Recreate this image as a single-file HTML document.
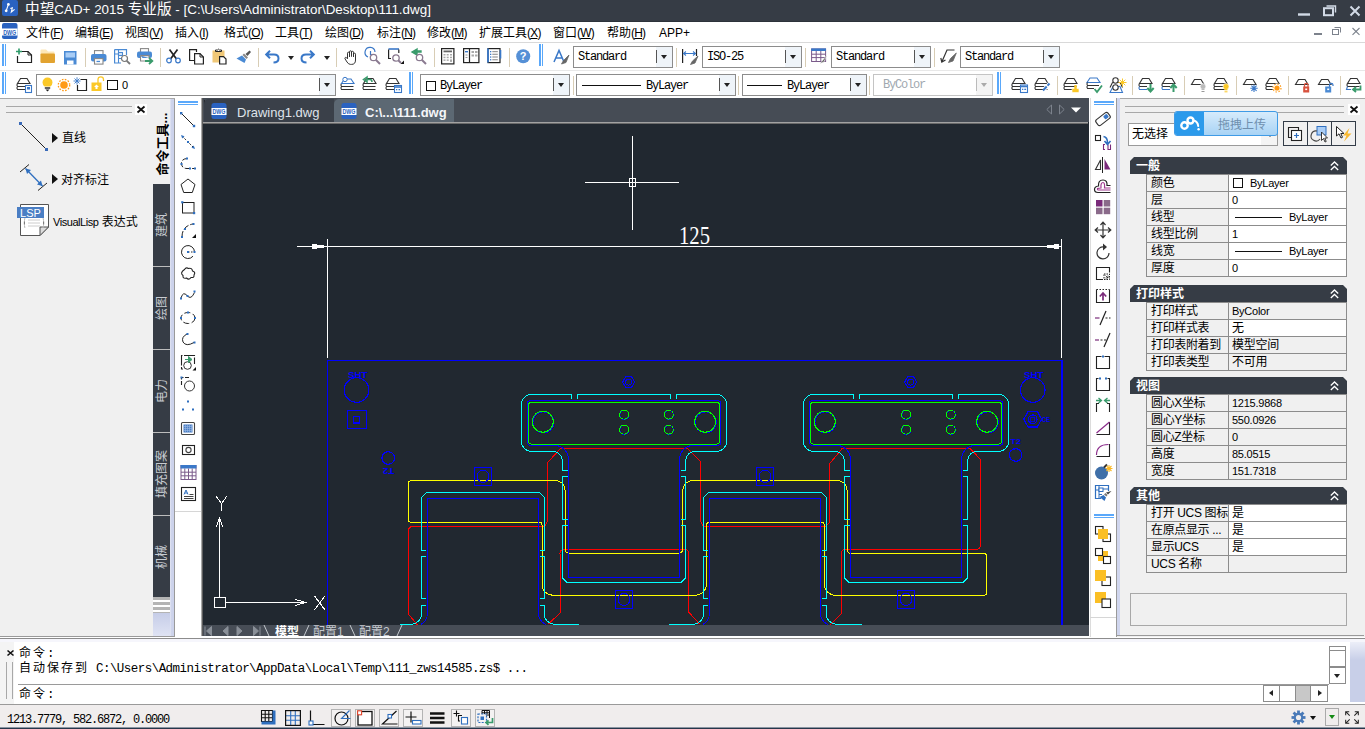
<!DOCTYPE html>
<html lang="zh">
<head>
<meta charset="utf-8">
<title>中望CAD+ 2015 专业版</title>
<style>
*{box-sizing:border-box;margin:0;padding:0}
html,body{width:1365px;height:729px;overflow:hidden;background:#fff}
body{font-family:"Liberation Sans","Noto Sans CJK SC",sans-serif;font-size:12px;color:#000;position:relative}
.abs{position:absolute}
svg{position:absolute;overflow:visible}
#title{left:0;top:0;width:1365px;height:22px;background:#363c45;color:#fff;box-shadow:inset 0 -1px 0 #2c323a}
#title .txt{left:25px;top:-1px;font-size:13.4px;line-height:21px;white-space:nowrap}
#title .txt b{font-weight:normal;font-size:14.67px}
#menu{left:0;top:22px;width:1365px;height:20px;background:#fff}
#menu span{position:absolute;top:1px;line-height:20px;font-size:12px;white-space:nowrap}
#menu i{font-style:normal;letter-spacing:-0.8px}
#menu u{text-decoration:underline;text-underline-offset:1px}
#tb{left:0;top:42px;width:1365px;height:56px;background:#fff;box-shadow:inset 0 1px 0 #d9d9d9}
.combo{position:absolute;height:22px;background:#fff;border:1px solid #8c8c8c;font-family:"Liberation Mono","Noto Sans CJK SC",monospace;font-size:12px;letter-spacing:-1.2px;line-height:20px;white-space:nowrap}
.combo .ar{position:absolute;right:0;top:0;width:16px;height:20px;background:#eff4f9}
.combo .ar:before{content:"";position:absolute;left:0;top:3px;width:1px;height:13px;background:#555}
.combo .ar:after{content:"";position:absolute;left:5px;top:8px;border:3.5px solid transparent;border-top:4px solid #222;border-bottom:0}
.combo.dis{border-color:#c4c4c4;color:#a0a8b0}.combo.dis .ar{background:#f4f4f4}.combo.dis .ar:before{background:#bbb}.combo.dis .ar:after{border-top-color:#aaa}
.vsep{position:absolute;width:1px;background:#d8cdb5}
.grip{position:absolute;width:4px;border-left:2px solid #5aa8fa;border-right:1px solid #5aa8fa}
#left{left:0;top:98px;width:175px;box-shadow:inset 0 1px 0 #a8a8a8;height:539px;background:#f0f0f0}
.vt{left:153px;width:17px;background:#363c45;box-shadow:0 1px 0 #bdbdbd;color:#c8ccd2;font-size:12px}
.vt span{position:absolute;left:50%;top:50%;white-space:nowrap;transform:translate(-50%,-50%) rotate(-90deg);line-height:17px}
.vt.act{background:#f0f0f0;color:#000;font-weight:bold;font-size:13px}
.vt.act span{top:46px}
#dtb{left:175px;top:98px;width:26px;height:539px;background:#fff}
#mtb{left:1090px;top:98px;width:27px;height:539px;background:#fff;border-right:1px solid #9a9a9a;box-shadow:inset 1px 0 0 #dcdcdc}
#draw{left:201px;top:98px;width:888px;height:539px;background:#212830}
.dtab{top:1px;height:23px;border-radius:5px 0 0 0;font-size:13px;line-height:22px;white-space:nowrap}
.dtab span{position:absolute;top:3px}
.cl{font-size:12px;line-height:16px;letter-spacing:2px;white-space:pre}
.cl .mono{font-family:"Liberation Mono",monospace;font-size:12.5px;letter-spacing:-0.54px}
#right{left:1117px;top:98px;width:248px;height:539px;background:#f0f0f0;box-shadow:inset 0 1px 0 #a8a8a8}
.ph{left:13px;width:217px;height:17px;background:#363c45;color:#fff;clip-path:polygon(4px 0,213px 0,217px 4px,217px 17px,0 17px,0 4px)}
.ph b{position:absolute;left:6px;top:1px;font-size:12px;line-height:17px}
.pl{left:29px;width:82px;height:18px;border:1px solid #8c8c8c;border-right:0;font-size:12px;line-height:16px;padding-left:4px;letter-spacing:-0.35px;white-space:nowrap;overflow:hidden}
.pv{left:111px;width:119px;height:18px;border:1px solid #8c8c8c;font-size:11px;line-height:16px;padding-left:3px;letter-spacing:-0.25px;white-space:nowrap;overflow:hidden}
.pv.w{background:#fff}
.pv .cj{font-size:12px}
.pv .sq{position:absolute;left:4px;top:3px;width:10px;height:10px;border:1px solid #111;background:#fff}
.pv .ln{position:absolute;left:6px;top:8px;width:47px;height:1px;background:#111}
#cmd{left:0;top:639px;width:1365px;height:65px;background:#fff}
.sb{top:5px;width:20px;height:18px;border:1px solid #b4b4b4;background:#f4f2f2}
#status{left:0;top:704px;width:1365px;height:25px;background:#f0eded;box-shadow:inset 0 1px 0 #9a9a9a}
</style>
</head>
<body>
<!-- TITLE BAR -->
<div id="title" class="abs">
  <svg width="18" height="18" style="left:2px;top:0" viewBox="0 0 18 18"><rect x="0" y="0" width="16" height="16" rx="2" fill="#2a62c0"/><path d="M4.200 10.800L6.400 4.400M8.300 8.600L10.300 7.800L9.300 12L12.600 9.400" stroke="#fff" stroke-width="1.100" fill="none"/><circle cx="6.400" cy="4.400" r="1.400" fill="#fff"/><circle cx="4.200" cy="10.800" r="1.400" fill="#fff"/></svg>
  <div class="abs txt"><b>中望</b>CAD+ 2015 <b>专业版</b> - [C:\Users\Administrator\Desktop\111.dwg]</div>
  <svg style="left:1296px;top:3px" width="66" height="16" viewBox="0 0 66 16" fill="none" stroke="#d2dae6"><path d="M2 11.500H14" stroke-width="2.400"/><rect x="28" y="5.200" width="9" height="7" stroke-width="2"/><path d="M30.500 3H39.500V9.500" stroke-width="1.400"/><path d="M54.500 3.500L63.500 12.500M63.500 3.500L54.500 12.500" stroke-width="2"/></svg>
</div>
<!-- MENU BAR -->
<div id="menu" class="abs">
  <svg style="left:2px;top:1px" width="16" height="16" viewBox="0 0 16 16"><rect x="0" y="0" width="15.500" height="16" rx="2" fill="#2a62c0"/><rect x="0" y="5.500" width="15.500" height="7" fill="#fff"/><text x="7.700" y="11.500" font-size="6.500" font-weight="bold" fill="#2a62c0" text-anchor="middle" font-family="Liberation Sans, sans-serif" textLength="13" lengthAdjust="spacingAndGlyphs">DWG</text></svg>
  <svg style="left:1312px;top:4px" width="50" height="10" viewBox="0 0 50 10" fill="none" stroke="#7c828c"><path d="M2 8H10" stroke-width="2"/><rect x="20.500" y="3.500" width="6" height="5" stroke-width="1"/><path d="M22.500 1.500H28.500V6.500" stroke-width="1"/><path d="M40.500 2L47.500 8.800M47.500 2L40.500 8.800" stroke-width="1.100"/></svg>
  <span style="left:26px">文件<i>(<u>F</u>)</i></span>
  <span style="left:75px">编辑<i>(<u>E</u>)</i></span>
  <span style="left:125px">视图<i>(<u>V</u>)</i></span>
  <span style="left:175px">插入<i>(<u>I</u>)</i></span>
  <span style="left:224px">格式<i>(<u>O</u>)</i></span>
  <span style="left:275px">工具<i>(<u>T</u>)</i></span>
  <span style="left:325px">绘图<i>(<u>D</u>)</i></span>
  <span style="left:377px">标注<i>(<u>N</u>)</i></span>
  <span style="left:427px">修改<i>(<u>M</u>)</i></span>
  <span style="left:479px">扩展工具<i>(<u>X</u>)</i></span>
  <span style="left:553px">窗口<i>(<u>W</u>)</i></span>
  <span style="left:607px">帮助<i>(<u>H</u>)</i></span>
  <span style="left:659px">APP+</span>
</div>
<!-- TOOLBARS -->
<div id="tb" class="abs"><div class="abs" style="left:0;top:28px;width:1365px;height:1px;background:#e8e8e8"></div>
<div class="grip" style="left:2px;top:2px;height:22px"></div>
<div class="grip" style="left:2px;top:30px;height:22px"></div>
<!-- row1 icons: coordinates relative to #tb (top=42) -->
<svg style="left:16px;top:6px" width="17" height="17" viewBox="0 0 17 17"><path d="M4 3.5H12L15.5 7V14.5H1.5V8" fill="none" stroke="#222" stroke-width="1.2"/><path d="M12 3.5V7H15.5" fill="none" stroke="#222" stroke-width="1"/><path d="M3 0.5V6.5M0 3.5H6" stroke="#2e9b6a" stroke-width="1.6"/></svg>
<svg style="left:40px;top:7px" width="16" height="15" viewBox="0 0 16 15"><path d="M0.5 1.5Q0.5 0.5 1.5 0.5H6L8 2.5H13.5Q14.5 2.5 14.5 3.5V13H0.5Z" fill="#fde7b8"/><path d="M0.5 5.5Q0.5 4.5 1.5 4.5H14Q15 4.5 15 5.5V13Q15 14 14 14H1.5Q0.5 14 0.5 13Z" fill="#e2a330"/></svg>
<svg style="left:64px;top:9px" width="13" height="14" viewBox="0 0 13 14"><rect x="0" y="0" width="12.5" height="13.5" fill="#4a8ad4"/><rect x="1.5" y="1.5" width="9.5" height="5" fill="#a9cdf6"/><rect x="3" y="9.5" width="6.5" height="4" fill="#fff"/></svg>
<div class="vsep" style="left:85px;top:6px;height:19px"></div>
<svg style="left:91px;top:8px" width="16" height="15" viewBox="0 0 16 15"><rect x="3.5" y="0.6" width="8.5" height="5" fill="#fff" stroke="#888" stroke-width="1.1"/><rect x="0" y="4" width="15.5" height="7.5" rx="2" fill="#4a8ad4"/><rect x="3.5" y="8.6" width="8.5" height="5.5" fill="#fff" stroke="#888" stroke-width="1.1"/><rect x="5.5" y="10.8" width="3.5" height="1.3" fill="#4a8ad4"/></svg>
<svg style="left:114px;top:6px" width="17" height="17" viewBox="0 0 17 17"><path d="M0.6 1.6H12.5V7M0.6 1.6V15H7" fill="none" stroke="#4a8ad4" stroke-width="1.2"/><path d="M4.5 1.6V15M4.5 10.5H8M0.6 6H4.5" stroke="#4a8ad4" stroke-width="1.1" fill="none"/><rect x="4.5" y="4.5" width="4" height="3" fill="#dbe9fb" stroke="#4a8ad4" stroke-width="1.1"/><circle cx="10.5" cy="10.5" r="3" fill="#fff" stroke="#777" stroke-width="1.2"/><path d="M12.8 12.8L16 16" stroke="#777" stroke-width="1.8"/></svg>
<svg style="left:137px;top:6px" width="17" height="17" viewBox="0 0 17 17"><rect x="3.5" y="0.6" width="8" height="5" fill="#fff" stroke="#888" stroke-width="1.1"/><rect x="0" y="3.5" width="15" height="6.5" rx="2" fill="#4a8ad4"/><path d="M3.5 7.6H12V10M3.5 7.6V13H8" fill="#fff" stroke="#888" stroke-width="1.1"/><path d="M8 13H15M12 10L15.3 13L12 16" fill="none" stroke="#3a9b6c" stroke-width="1.8"/></svg>
<div class="vsep" style="left:160px;top:6px;height:19px"></div>
<svg style="left:166px;top:7px" width="16" height="15" viewBox="0 0 16 15"><path d="M3.5 0.5L10.5 10M11.5 0.5L4.5 10" stroke="#222" stroke-width="1.7" fill="none"/><circle cx="3" cy="11.5" r="2.3" fill="#fff" stroke="#3a78c8" stroke-width="1.2"/><circle cx="12" cy="11.5" r="2.3" fill="#fff" stroke="#3a78c8" stroke-width="1.2"/></svg>
<svg style="left:189px;top:7px" width="16" height="16" viewBox="0 0 16 16"><path d="M5 11.5H0.6V0.6H7.5V3" fill="none" stroke="#222" stroke-width="1.2"/><path d="M5.6 4.6H11L14.4 8V15H5.6Z" fill="#fff" stroke="#222" stroke-width="1.2"/><path d="M11 4.6V8H14.4" fill="none" stroke="#222" stroke-width="1"/></svg>
<svg style="left:212px;top:6px" width="16" height="17" viewBox="0 0 16 17"><rect x="0.5" y="2.5" width="12" height="12" fill="#f0c878"/><path d="M3.5 3.5V2H5.5Q6.5 0.3 7.5 2H9.5V3.5Z" fill="#fff" stroke="#222" stroke-width="1"/><path d="M7.6 8.6H11.5L14 11V16H7.6Z" fill="#fff" stroke="#222" stroke-width="1.2"/></svg>
<svg style="left:236px;top:8px" width="16" height="14" viewBox="0 0 16 14"><path d="M13.5 0.5L15 2L11.5 6L9.5 4Z" fill="#555"/><path d="M8 3.5L12 7.5L10.5 9L6.5 5Z" fill="#888"/><path d="M6 5.5L10 9.5L8.5 13L0.5 8.5Z" fill="#4a8ad4"/></svg>
<div class="vsep" style="left:258px;top:6px;height:19px"></div>
<svg style="left:265px;top:8px" width="15" height="14" viewBox="0 0 15 14"><path d="M5 0.8L1.2 4.5L5 8.2M1.5 4.5H9Q13.5 4.5 13.5 8.5Q13.5 12.5 8.5 12.5" fill="none" stroke="#3a78c8" stroke-width="2"/></svg>
<div class="abs" style="left:288px;top:14px;border:3px solid transparent;border-top:4px solid #222;border-bottom:0"></div>
<svg style="left:300px;top:8px" width="15" height="14" viewBox="0 0 15 14"><path d="M10 0.8L13.8 4.5L10 8.2M13.5 4.5H6Q1.5 4.5 1.5 8.5Q1.5 12.5 6.5 12.5" fill="none" stroke="#3a78c8" stroke-width="2"/></svg>
<div class="abs" style="left:324px;top:14px;border:3px solid transparent;border-top:4px solid #222;border-bottom:0"></div>
<div class="vsep" style="left:336px;top:6px;height:19px"></div>
<svg style="left:344px;top:8px" width="13" height="15" viewBox="0 0 13 15"><path d="M3.500 8.800V3.200A1 1 0 0 1 5.500 3.200V7M5.500 6.500V1.800A1 1 0 0 1 7.500 1.800V6.500M7.500 6.500V2.300A1 1 0 0 1 9.500 2.300V7M9.500 7V4.200A1 1 0 0 1 11.500 4.200V10Q11.500 14.400 7.500 14.400H6.500Q4.500 14.400 3 12L1 8.800Q0.600 7.600 1.600 7.400Q2.600 7.300 3.500 8.800" fill="none" stroke="#333" stroke-width="1"/></svg>
<svg style="left:365px;top:6px" width="16" height="17" viewBox="0 0 16 17"><path d="M3 9A5 5 0 1 1 10 4" fill="none" stroke="#3a78c8" stroke-width="1.2"/><path d="M5.5 3V6.5H8" fill="none" stroke="#3a78c8" stroke-width="1.2"/><circle cx="8.5" cy="9.5" r="3.2" fill="#fff" stroke="#8a7a90" stroke-width="1.3"/><path d="M11 12L15 16" stroke="#8a7a90" stroke-width="1.9"/></svg>
<svg style="left:388px;top:6px" width="17" height="17" viewBox="0 0 17 17"><path d="M0.5 1H11" stroke="#3a78c8" stroke-width="1.6"/><path d="M3 10.5H0.6V1.5M10.8 1.5V5" fill="none" stroke="#222" stroke-width="1.2"/><circle cx="8" cy="10" r="3.2" fill="#fff" stroke="#8a7a90" stroke-width="1.3"/><path d="M10.5 12.5L13 15" stroke="#8a7a90" stroke-width="1.9"/><path d="M16 12.5V16H12.5Z" fill="#111"/></svg>
<svg style="left:411px;top:6px" width="16" height="17" viewBox="0 0 16 17"><path d="M6 1L1 4L6 7ZM5 4H10V3H5Z" fill="#3a9b6c" stroke="#3a9b6c" stroke-width="1.4"/><circle cx="8.5" cy="9.5" r="3.2" fill="#fff" stroke="#8a7a90" stroke-width="1.3"/><path d="M11 12L15 16" stroke="#8a7a90" stroke-width="1.9"/></svg>
<div class="vsep" style="left:434px;top:6px;height:19px"></div>
<svg style="left:441px;top:6px" width="14" height="17" viewBox="0 0 14 17"><rect x="0.6" y="0.6" width="12.3" height="15.3" fill="#fff" stroke="#222" stroke-width="1.2"/><rect x="2.5" y="2.5" width="8.5" height="1.8" fill="#666"/><g fill="#aaa"><rect x="2.5" y="6" width="2" height="1.5"/><rect x="5.7" y="6" width="2" height="1.5"/><rect x="9" y="6" width="2" height="1.5"/><rect x="2.5" y="8.7" width="2" height="1.5"/><rect x="5.7" y="8.7" width="2" height="1.5"/><rect x="9" y="8.7" width="2" height="1.5"/><rect x="2.5" y="11.4" width="2" height="1.5"/><rect x="5.7" y="11.4" width="2" height="1.5"/><rect x="9" y="11.4" width="2" height="2.5"/></g></svg>
<svg style="left:463px;top:6px" width="17" height="16" viewBox="0 0 17 16"><rect x="0.6" y="0.6" width="15.3" height="14" fill="#fff" stroke="#222" stroke-width="1.2"/><path d="M6.5 0.6V14.6" stroke="#222" stroke-width="1.2"/><rect x="2" y="3" width="3" height="1.4" fill="#3a78c8"/><rect x="2.5" y="6.5" width="2" height="1" fill="#999"/><rect x="2.5" y="9" width="2" height="1" fill="#999"/><g fill="#aaa"><rect x="8.5" y="3" width="2.5" height="2"/><rect x="12" y="3" width="2.5" height="2"/><rect x="8.5" y="6.5" width="2.5" height="2"/><rect x="12" y="6.5" width="2.5" height="2"/></g></svg>
<svg style="left:487px;top:6px" width="15" height="16" viewBox="0 0 15 16"><rect x="1" y="0.6" width="12" height="14" fill="#fff" stroke="#222" stroke-width="1.2"/><path d="M1 0.6V14.6" stroke="#3a78c8" stroke-width="1.8"/><path d="M13.5 2V10.5" stroke="#3a78c8" stroke-width="1.6"/><g fill="#3a78c8"><rect x="3" y="3" width="1.3" height="1.3"/><rect x="3" y="5.7" width="1.3" height="1.3"/><rect x="3" y="8.4" width="1.3" height="1.3"/><rect x="3" y="11.1" width="1.3" height="1.3"/></g><g fill="#999"><rect x="5.3" y="3" width="5.5" height="1.2"/><rect x="5.3" y="5.7" width="5.5" height="1.2"/><rect x="5.3" y="8.4" width="5.5" height="1.2"/><rect x="5.3" y="11.1" width="5.5" height="1.2"/></g></svg>
<div class="vsep" style="left:509px;top:6px;height:19px"></div>
<svg style="left:516px;top:7px" width="15" height="15" viewBox="0 0 15 15"><circle cx="7.2" cy="7.2" r="7" fill="#5590d6"/><text x="7.2" y="11.3" font-size="11" font-weight="bold" fill="#fff" text-anchor="middle" font-family="Liberation Sans, sans-serif">?</text></svg>
<div class="grip" style="left:539px;top:2px;height:22px"></div>
<svg style="left:553px;top:7px" width="17" height="16" viewBox="0 0 17 16"><path d="M1 13L6 1.5L11 13M3 9H9" fill="none" stroke="#3a78c8" stroke-width="1.5"/><path d="M16 6L10.500 11.500L8.500 15L13 13.500Z" fill="#666" stroke="#666" stroke-width="0.800"/></svg>
<div class="combo" style="left:573px;top:4px;width:100px"><span style="margin-left:4px">Standard</span><div class="ar"></div></div>
<div class="vsep" style="left:676px;top:6px;height:19px"></div>
<svg style="left:682px;top:6px" width="17" height="17" viewBox="0 0 17 17"><path d="M0.6 1V15M14.5 1V8" stroke="#222" stroke-width="1.2"/><path d="M1.5 5.5H13.5M4 3.5L1.5 5.5L4 7.5M11 3.5L13.5 5.5L11 7.5" fill="none" stroke="#3a78c8" stroke-width="1.1"/><path d="M16 8L10.500 13L8.500 16.500L13 15Z" fill="#666" stroke="#666" stroke-width="0.800"/></svg>
<div class="combo" style="left:702px;top:4px;width:100px"><span style="margin-left:4px">ISO-25</span><div class="ar"></div></div>
<div class="vsep" style="left:805px;top:6px;height:19px"></div>
<svg style="left:811px;top:6px" width="17" height="17" viewBox="0 0 17 17"><rect x="0.6" y="1" width="14" height="12.5" fill="#fff" stroke="#7a5a8a" stroke-width="1"/><rect x="0.2" y="0.4" width="14.8" height="2.6" fill="#3a78c8"/><path d="M0.6 6.2H14.6M0.6 9.6H14.6M5.2 3V13.5M9.8 3V13.5" stroke="#7a5a8a" stroke-width="1"/><path d="M16 7L11.5 12.5L9 15.5L13 14Z" fill="#666" stroke="#fff" stroke-width="0.5"/></svg>
<div class="combo" style="left:831px;top:4px;width:100px"><span style="margin-left:4px">Standard</span><div class="ar"></div></div>
<div class="vsep" style="left:934px;top:6px;height:19px"></div>
<svg style="left:940px;top:7px" width="17" height="15" viewBox="0 0 17 15"><path d="M14.5 1H7L2 12.5M0.8 9L1.8 13L5.5 11" fill="none" stroke="#333" stroke-width="1.2"/><path d="M16.300 4L10.500 9.500L8.500 13.500L13 12Z" fill="#666" stroke="#666" stroke-width="0.800"/></svg>
<div class="combo" style="left:960px;top:4px;width:100px"><span style="margin-left:4px">Standard</span><div class="ar"></div></div>
<!-- row2 -->
<svg style="left:16px;top:35px" width="16" height="16"><path d="M4.5 1.5H11L14 6.5H1.5Z M1.5 6.5Q0.3 8 1.5 9.5H13.5 M1.5 9.5Q0.3 11 1.5 12.500H13.500" fill="none" stroke="#333" stroke-width="1.100"/><rect x="9.5" y="8.5" width="6" height="7" fill="#fff" stroke="#3a78c8" stroke-width="1.1"/><rect x="11" y="10" width="3" height="2.5" fill="#3a78c8"/></svg>
<div class="combo" style="left:36px;top:32px;width:300px;height:22px">
 <svg style="left:5px;top:2px" width="12" height="15" viewBox="0 0 12 15"><path d="M5.5 0.5A5 5 0 0 1 10.5 5.5Q10.5 7.5 8.5 9.5H2.5Q0.5 7.5 0.5 5.5A5 5 0 0 1 5.5 0.5Z" fill="#fbc827"/><rect x="2.8" y="10.3" width="5.4" height="1.4" fill="#222"/><path d="M3.5 12.5H7.5L5.5 14.5Z" fill="#222"/></svg>
 <svg style="left:20px;top:3px" width="14" height="14" viewBox="0 0 14 14"><circle cx="7" cy="7" r="3.8" fill="#ff9a16"/><g stroke="#ff9a16" stroke-width="1.3" stroke-dasharray="1.6 1.4" fill="none"><circle cx="7" cy="7" r="5.7"/></g></svg>
 <svg style="left:36px;top:2px" width="15" height="15" viewBox="0 0 15 15"><path d="M7.5 2.5H13.5V13.5H4.5V8" fill="none" stroke="#222" stroke-width="1.2"/><path d="M4 0.3V7.7M0.5 4H7.5M1.5 1.5L6.5 6.5M6.5 1.5L1.5 6.5" stroke="#3a78c8" stroke-width="0.9"/></svg>
 <svg style="left:54px;top:1px" width="14" height="16" viewBox="0 0 14 16"><path d="M7 7V3.5Q7 0.8 9.8 0.8Q12.5 0.8 12.5 3.5V5" fill="none" stroke="#fbc827" stroke-width="1.3"/><rect x="0.5" y="6.5" width="10" height="8.5" fill="#fbc827"/><path d="M5.5 8.5L8 11H6.5V13H4.5V11H3Z" fill="#fff"/></svg>
 <div class="abs" style="left:70px;top:5px;width:11px;height:10px;border:1px solid #111;background:#fff"></div>
 <span class="abs" style="left:85px;top:0;font-family:'Liberation Sans',sans-serif;font-size:11px">0</span>
 <div class="ar" style="height:20px"></div>
</div>
<svg style="left:340px;top:35px" width="16" height="16"><path d="M1.500 6.500Q0.300 8 1.500 9.500H13.500M1.500 9.500Q0.300 11 1.500 12.500H13.500" fill="none" stroke="#333" stroke-width="1.100"/><path d="M7 2H11L14 6.500H1.500L3.500 3.500" fill="none" stroke="#3a78c8" stroke-width="1.100"/><circle cx="5" cy="2.500" r="2.200" fill="#fff" stroke="#3a78c8" stroke-width="1"/></svg>
<svg style="left:362px;top:35px" width="16" height="16"><path d="M4.5 1.5H11L14 6.5H1.5Z M1.5 6.5Q0.3 8 1.5 9.5H13.5 M1.5 9.5Q0.3 11 1.5 12.500H13.500" fill="none" stroke="#333" stroke-width="1.100"/><path d="M5 0L1.5 2.5L5 5ZM4 2.5H8Q10 2.5 10 5" fill="none" stroke="#3a9b6c" stroke-width="1.5"/></svg>
<svg style="left:385px;top:35px" width="17" height="16"><path d="M4.5 1.5H11L14 6.5H1.5Z M1.5 6.5Q0.3 8 1.5 9.5H13.5 M1.5 9.5Q0.3 11 1.5 12.500H13.500" fill="none" stroke="#333" stroke-width="1.100"/><rect x="9.5" y="8.5" width="7" height="7" fill="#fff" stroke="#3a78c8" stroke-width="1.1"/><path d="M9.5 10H16.5" stroke="#3a78c8" stroke-width="1.6"/><rect x="11" y="12" width="1.3" height="1.3" fill="#3a78c8"/><rect x="13.5" y="12" width="1.5" height="1.3" fill="#3a78c8"/></svg>
<div class="grip" style="left:409px;top:30px;height:22px"></div>
<div class="combo" style="left:420px;top:32px;width:150px;height:22px"><div class="abs" style="left:5px;top:6px;width:10px;height:10px;border:1px solid #111"></div><span class="abs" style="left:19px;top:1px">ByLayer</span><div class="ar" style="height:20px"></div></div>
<div class="vsep" style="left:573px;top:34px;height:19px"></div>
<div class="combo" style="left:576px;top:32px;width:160px;height:22px"><div class="abs" style="left:5px;top:10px;width:59px;height:1px;background:#111"></div><span class="abs" style="left:69px;top:1px">ByLayer</span><div class="ar" style="height:20px"></div></div>
<div class="vsep" style="left:738px;top:34px;height:19px"></div>
<div class="combo" style="left:742px;top:32px;width:125px;height:22px"><div class="abs" style="left:4px;top:10px;width:35px;height:1px;background:#111"></div><span class="abs" style="left:44px;top:1px">ByLayer</span><div class="ar" style="height:20px"></div></div>
<div class="vsep" style="left:869px;top:34px;height:19px"></div>
<div class="combo dis" style="left:873px;top:32px;width:120px;height:22px"><span class="abs" style="left:9px;top:0px">ByColor</span><div class="ar" style="height:20px"></div></div>
<div class="grip" style="left:997px;top:30px;height:22px"></div>
<svg style="left:1011px;top:35px" width="17" height="16"><path d="M4.5 1.5H11L14 6.5H1.5Z M1.5 6.5Q0.3 8 1.5 9.5H13.5 M1.5 9.5Q0.3 11 1.5 12.500H13.500" fill="none" stroke="#333" stroke-width="1.100"/><rect x="9.5" y="8" width="7" height="7.5" fill="#fff" stroke="#3a78c8" stroke-width="1.1"/><path d="M9.5 9.5H16.5" stroke="#3a78c8" stroke-width="1.6"/><rect x="11" y="11.7" width="1.3" height="1.3" fill="#3a78c8"/><rect x="13.3" y="11.7" width="1.8" height="1.3" fill="#3a78c8"/></svg>
<svg style="left:1034px;top:35px" width="17" height="16"><path d="M4.5 1.5H11L14 6.5H1.5Z M1.5 6.5Q0.3 8 1.5 9.5H13.5 M1.5 9.5Q0.3 11 1.5 12.500H13.500" fill="none" stroke="#333" stroke-width="1.100"/><path d="M15.5 6.5L10 12.5" stroke="#fff" stroke-width="4"/><path d="M15.5 6.5L13.5 8.7M12.7 9.5L9 13.5" stroke="#3a78c8" stroke-width="2"/></svg>
<div class="vsep" style="left:1057px;top:34px;height:19px"></div>
<svg style="left:1063px;top:35px" width="17" height="16"><path d="M4.5 1.5H11L14 6.5H1.5Z M1.5 6.5Q0.3 8 1.5 9.5H13.5 M1.5 9.5Q0.3 11 1.5 12.500H13.500" fill="none" stroke="#333" stroke-width="1.100"/><rect x="9" y="11.5" width="7" height="4" rx="1" fill="#fbc827" stroke="#fff" stroke-width="0.6"/><rect x="11.3" y="8" width="2.4" height="4" fill="#fbc827"/></svg>
<svg style="left:1086px;top:35px" width="17" height="17" viewBox="0 0 17 17"><path d="M4 1H11L14 5.5H1Z" fill="none" stroke="#3a78c8" stroke-width="1.1"/><path d="M1.5 5.5Q0.3 7 1.5 8.5H13 M1.5 8.5Q0.3 10 1.5 11.5H8" fill="none" stroke="#333" stroke-width="1.1"/><path d="M8.5 12L11 15L16 8.5" fill="none" stroke="#3a9b6c" stroke-width="1.8"/></svg>
<svg style="left:1109px;top:35px" width="18" height="17" viewBox="0 0 18 17"><path d="M3.5 5.5H11L13.5 10.5M1 10.5L3.5 5.5" fill="none" stroke="#333" stroke-width="1.1"/><path d="M1 15.5L4 9.5H11L13.5 15.5Z" fill="#fff" stroke="#3a78c8" stroke-width="1.1"/><circle cx="6.5" cy="3.5" r="2.7" fill="#fff" stroke="#333" stroke-width="1.1"/><circle cx="6.5" cy="10.5" r="2.7" fill="#fff" stroke="#333" stroke-width="1.1"/><path d="M13.5 1.5V9.5M9.5 5.5H17.5M10.7 2.7L16.3 8.3M16.3 2.7L10.7 8.3" stroke="#fbc827" stroke-width="1"/></svg>
<div class="vsep" style="left:1132px;top:34px;height:19px"></div>
<svg style="left:1138px;top:35px" width="17" height="16"><path d="M4.5 1.5H11L14 6.5H1.5Z M1.5 6.5Q0.3 8 1.5 9.5H9" fill="none" stroke="#333" stroke-width="1.1"/><path d="M1.5 9.5Q0.3 11 1.5 12.5H9" fill="none" stroke="#3a78c8" stroke-width="1.1"/><path d="M12.5 7V14M9.3 11L12.5 14.5L15.7 11" fill="none" stroke="#3a9b6c" stroke-width="2"/></svg>
<svg style="left:1161px;top:35px" width="17" height="16"><path d="M4.5 1.5H11L14 6.5H1.5Z M1.5 6.5Q0.3 8 1.5 9.5H9" fill="none" stroke="#333" stroke-width="1.1"/><path d="M1.5 9.5Q0.3 11 1.5 12.5H9" fill="none" stroke="#3a78c8" stroke-width="1.1"/><path d="M12.5 15V8M9.3 11L12.5 7.5L15.7 11" fill="none" stroke="#3a9b6c" stroke-width="2"/></svg>
<div class="vsep" style="left:1184px;top:34px;height:19px"></div>
<svg style="left:1190px;top:35px" width="17" height="16"><path d="M4.500 2.500H11L14 7.500H1.500Z" fill="none" stroke="#333" stroke-width="1.100"/><circle cx="13" cy="9.5" r="2.8" fill="#bbb" stroke="#fff" stroke-width="0.6"/><rect x="11.5" y="11.5" width="3" height="1.5" fill="#bbb"/><rect x="11.5" y="14" width="3" height="1" fill="#999"/></svg>
<svg style="left:1213px;top:35px" width="17" height="16"><path d="M4.5 1.5H11L14 6.5H1.5Z M1.5 6.5Q0.3 8 1.5 9.5H13.5 M1.5 9.5Q0.3 11 1.5 12.500H13.500" fill="none" stroke="#333" stroke-width="1.100"/><circle cx="13" cy="9.5" r="3" fill="#fbc827" stroke="#fff" stroke-width="0.6"/><rect x="11.5" y="11.5" width="3" height="1.8" fill="#fbc827"/><rect x="11.5" y="14.3" width="3" height="1" fill="#fbc827"/></svg>
<div class="vsep" style="left:1236px;top:34px;height:19px"></div>
<svg style="left:1242px;top:35px" width="17" height="16"><path d="M4.500 2.500H11L14 7.500H1.500Z" fill="none" stroke="#333" stroke-width="1.100"/><path d="M12 7.5V15M8.3 11.2H15.7M9.4 8.6L14.6 13.8M14.6 8.6L9.4 13.8" stroke="#3a78c8" stroke-width="1.1"/></svg>
<svg style="left:1265px;top:35px" width="17" height="16"><path d="M4.5 1.5H11L14 6.5H1.5Z M1.5 6.5Q0.3 8 1.5 9.5H13.5 M1.5 9.5Q0.3 11 1.5 12.500H13.500" fill="none" stroke="#333" stroke-width="1.100"/><circle cx="12" cy="11" r="4.6" fill="#fff"/><circle cx="12" cy="11" r="2.6" fill="#ff9a16"/><circle cx="12" cy="11" r="4" fill="none" stroke="#ff9a16" stroke-width="1.2" stroke-dasharray="1.5 1.6"/></svg>
<div class="vsep" style="left:1288px;top:34px;height:19px"></div>
<svg style="left:1294px;top:35px" width="17" height="16"><path d="M4.500 2.500H11L14 7.500H1.500Z" fill="none" stroke="#333" stroke-width="1.100"/><path d="M10.5 10V8Q10.5 6.3 12.2 6.3Q14 6.3 14 8V10" fill="none" stroke="#d8523e" stroke-width="1.2"/><rect x="9.2" y="9.5" width="6" height="6" fill="#d8523e"/><rect x="11.2" y="11.5" width="2" height="1.6" fill="#fff"/></svg>
<svg style="left:1317px;top:35px" width="17" height="16"><path d="M4.500 2.500H11L14 7.500H1.500Z" fill="none" stroke="#333" stroke-width="1.100"/><path d="M12.5 10V8Q12.5 6.3 14.2 6.3Q16 6.3 16 8V9" fill="none" stroke="#3a78c8" stroke-width="1.2"/><rect x="8.2" y="9.5" width="6" height="6" fill="#4a8ad4"/><rect x="10.2" y="11.5" width="2" height="1.6" fill="#fff"/></svg>
<div class="vsep" style="left:1340px;top:34px;height:19px"></div>
<svg style="left:1346px;top:35px" width="17" height="16"><path d="M4.5 1.5H11L14 6.5H1.5Z M1.5 6.5Q0.3 8 1.5 9.5H13.5" fill="none" stroke="#333" stroke-width="1.1"/><path d="M1.5 9.5L0.5 12.5H5" fill="none" stroke="#3a78c8" stroke-width="1.1"/><path d="M14.5 8.5V12.5H7.5M10 10L7 12.5L10 15" fill="none" stroke="#3a9b6c" stroke-width="1.8"/></svg>
</div>
<!-- LEFT PANEL -->
<div id="left" class="abs">
 <div class="abs" style="left:6px;top:8px;width:126px;height:1px;background:#a8a8a8"></div>
 <div class="abs" style="left:6px;top:14px;width:126px;height:1px;background:#a8a8a8"></div>
 <div class="abs" style="left:135px;top:6px;width:12px;height:11px;background:#fff"></div>
 <svg style="left:137px;top:8px" width="8" height="7" viewBox="0 0 8 7"><path d="M0.5 0.5L7.5 6.5M7.5 0.5L0.5 6.5" stroke="#111" stroke-width="1.8"/></svg>
 <svg style="left:17px;top:22px" width="34" height="34" viewBox="0 0 34 34"><path d="M3.5 3.5L29.5 29.5" stroke="#222" stroke-width="1"/><rect x="2" y="2" width="3" height="3" fill="#3a6ab8"/><rect x="28" y="28" width="3" height="3" fill="#3a6ab8"/></svg>
 <div class="abs" style="left:52px;top:35px;border:5px solid transparent;border-left:6px solid #111;border-right:0"></div>
 <div class="abs" style="left:62px;top:32px;font-size:12px;line-height:16px">直线</div>
 <svg style="left:17px;top:64px" width="34" height="32" viewBox="0 0 34 32"><path d="M3 10L12 2.5M21 28.5L30 21" stroke="#222" stroke-width="1"/><path d="M8.5 6.5L25.5 24" stroke="#2f6fbf" stroke-width="1.3"/><path d="M8.5 6.5L14 8L10 12ZM25.5 24L20 22.5L24 18.5Z" fill="#2f6fbf"/></svg>
 <div class="abs" style="left:52px;top:76px;border:5px solid transparent;border-left:6px solid #111;border-right:0"></div>
 <div class="abs" style="left:61px;top:74px;font-size:12px;line-height:16px">对齐标注</div>
 <svg style="left:16px;top:105px" width="35" height="34" viewBox="0 0 35 34"><path d="M4.5 1.5H32.5V24L24 32.5H4.5Z" fill="#fff" stroke="#555" stroke-width="1"/><path d="M32.5 24H24V32.5Z" fill="#ddd" stroke="#555" stroke-width="1"/><g stroke="#ccc" stroke-width="1"><path d="M12 17H24M12 20H24M12 23H24M9 15Q7 20 9 25M27 15Q29 20 27 25"/></g><rect x="1" y="4" width="27" height="11" fill="#4a7ec4"/><text x="14.5" y="13.5" font-size="11" fill="#fff" text-anchor="middle" font-family="Liberation Sans, sans-serif">LSP</text></svg>
 <div class="abs" style="left:53px;top:116px;font-size:12px;line-height:16px;white-space:nowrap"><span style="font-size:11px;letter-spacing:-0.45px">VisualLisp</span> 表达式</div>
 <!-- vertical tabs -->
 <div class="abs vt act" style="top:0;height:86px"><span>命令工具...</span></div>
 <div class="abs vt" style="top:86px;height:82px"><span>建筑</span></div>
 <div class="abs vt" style="top:169px;height:82px"><span>绘图</span></div>
 <div class="abs vt" style="top:252px;height:82px"><span>电力</span></div>
 <div class="abs vt" style="top:335px;height:82px"><span>填充图案</span></div>
 <div class="abs vt" style="top:418px;height:81px"><span>机械</span></div>
 <div class="abs" style="left:153px;top:499px;width:17px;height:16px;background:repeating-linear-gradient(#b4b4b4 0,#b4b4b4 2.5px,#fff 2.5px,#fff 5px)"></div>
 <div class="abs" style="left:153px;top:515px;width:17px;height:23px;background:linear-gradient(#c6cde8,#dfe3f3)"></div>
 <div class="abs" style="left:170px;top:0;width:5px;height:539px;background:linear-gradient(90deg,#e4e7f3,#cdd3eb 40%);border-right:1px solid #9a9a9a"></div>
 <div class="abs" style="left:0;top:0;width:175px;height:1px;background:#a8a8a8"></div>
 <div class="abs" style="left:0;top:538px;width:175px;height:1px;background:#9a9a9a"></div>
</div>

<div id="dtb" class="abs">
 <div class="abs" style="left:3px;top:3px;width:20px;height:4px;border-top:2px solid #5aa8fa;border-bottom:1px solid #5aa8fa"></div>
 <svg style="left:3px;top:12px" width="20" height="20" viewBox="0 0 20 20"><path d="M3.5 3.5L16 16" stroke="#222" stroke-width="1"/><rect x="2" y="2" width="2.4" height="2.4" fill="#2f6fbf"/><rect x="14.8" y="14.8" width="2.4" height="2.4" fill="#2f6fbf"/></svg>
 <svg style="left:3px;top:34px" width="20" height="20" viewBox="0 0 20 20"><path d="M4 4L16 16" stroke="#222" stroke-width="1" stroke-dasharray="2 1.5"/><path d="M3 3L6.5 4.2L4.2 6.5ZM17 17L13.5 15.8L15.8 13.5Z" fill="#2f6fbf"/><rect x="9" y="9" width="2" height="2" fill="#2f6fbf"/></svg>
 <svg style="left:3px;top:56px" width="20" height="20" viewBox="0 0 20 20"><path d="M9 4.5Q3 5 3.5 10Q4 14.5 9 14.5H17" fill="none" stroke="#222" stroke-width="1" stroke-dasharray="5 2.2"/><g fill="#2f6fbf"><rect x="8" y="3.5" width="2" height="2"/><rect x="2.5" y="9" width="2" height="2"/><rect x="11" y="13.5" width="2" height="2"/><rect x="16" y="13.5" width="2" height="2"/></g></svg>
 <svg style="left:3px;top:78px" width="20" height="20" viewBox="0 0 20 20"><path d="M10 3L17 8.5L14.3 16.5H5.7L3 8.5Z" fill="none" stroke="#222" stroke-width="1"/></svg>
 <svg style="left:3px;top:100px" width="20" height="20" viewBox="0 0 20 20"><rect x="4.5" y="4.5" width="11.5" height="10.5" fill="none" stroke="#222" stroke-width="1"/><rect x="3.2" y="3.2" width="2.2" height="2.2" fill="#2f6fbf"/><rect x="15" y="14" width="2.2" height="2.2" fill="#2f6fbf"/></svg>
 <svg style="left:3px;top:122px" width="20" height="20" viewBox="0 0 20 20"><path d="M4 17Q4 6 15 4" fill="none" stroke="#222" stroke-width="1" stroke-dasharray="6 2"/><g fill="#2f6fbf"><rect x="3" y="16" width="2" height="2"/><rect x="6" y="8" width="2" height="2"/><rect x="14.5" y="3" width="2" height="2"/></g><path d="M18 14V18H14Z" fill="#111"/></svg>
 <svg style="left:3px;top:144px" width="20" height="20" viewBox="0 0 20 20"><path d="M16.5 10A6.5 6.5 0 1 0 15 14.2" fill="none" stroke="#222" stroke-width="1"/><path d="M10 10H16" stroke="#222" stroke-width="1" stroke-dasharray="1.5 1.5"/><rect x="9" y="9" width="2" height="2" fill="#2f6fbf"/><rect x="15.5" y="9" width="2" height="2" fill="#2f6fbf"/></svg>
 <svg style="left:3px;top:166px" width="20" height="20" viewBox="0 0 20 20"><path d="M6.5 5.5Q8 3 10.5 4.5Q14 3.5 14.5 7Q18 8 16 11Q16.5 14 13 13.5Q11 16.5 8.5 14Q4.5 15 5 11.5Q1.5 9 6.5 5.5Z" fill="none" stroke="#222" stroke-width="1.1"/></svg>
 <svg style="left:3px;top:188px" width="20" height="20" viewBox="0 0 20 20"><path d="M3 12Q5 5 9 9.5Q13 14.5 16.5 6.5" fill="none" stroke="#222" stroke-width="1"/><g fill="#2f6fbf"><rect x="2" y="11.5" width="2" height="2"/><rect x="8.5" y="9" width="2" height="2"/><rect x="15.5" y="4.5" width="2" height="2"/></g></svg>
 <svg style="left:3px;top:210px" width="20" height="20" viewBox="0 0 20 20"><ellipse cx="10" cy="10" rx="7" ry="5.5" fill="none" stroke="#222" stroke-width="1" stroke-dasharray="6 2.5"/><g fill="#2f6fbf"><rect x="9" y="3.5" width="2" height="2"/><rect x="2" y="9" width="2" height="2"/><rect x="16" y="9" width="2" height="2"/></g></svg>
 <svg style="left:3px;top:232px" width="20" height="20" viewBox="0 0 20 20"><path d="M9 4Q3 7 5 12Q8 17 16 12.5" fill="none" stroke="#222" stroke-width="1"/><g fill="#2f6fbf"><rect x="8.5" y="3" width="2" height="2"/><rect x="15.5" y="11.5" width="2" height="2"/></g></svg>
 <svg style="left:3px;top:254px" width="20" height="20" viewBox="0 0 20 20"><path d="M3.5 13.5V3.5H16.5V12M3.5 15V17H5" fill="none" stroke="#222" stroke-width="1.1" stroke-dasharray="11 1.5"/><circle cx="9.5" cy="13.5" r="3.8" fill="#fff" stroke="#333" stroke-width="1"/><path d="M7 7.5H13M10.5 4.5L14 7.5L10.5 10.5Z" fill="#3a9b6c" stroke="#3a9b6c" stroke-width="1"/><path d="M18 15V18.5H14.5Z" fill="#111"/></svg>
 <svg style="left:3px;top:276px" width="20" height="20" viewBox="0 0 20 20"><path d="M3.5 11V3.5H12" fill="none" stroke="#222" stroke-width="1.1" stroke-dasharray="4 1.5"/><rect x="2.5" y="2.5" width="2" height="2" fill="#2f6fbf"/><circle cx="11.5" cy="12" r="5" fill="#fff" stroke="#333" stroke-width="1"/></svg>
 <svg style="left:3px;top:298px" width="20" height="20" viewBox="0 0 20 20"><g fill="#2f6fbf"><rect x="9" y="4.5" width="2" height="2"/><rect x="4" y="12.5" width="2" height="2"/><rect x="14" y="12.5" width="2" height="2"/></g></svg>
 <svg style="left:3px;top:320px" width="20" height="20" viewBox="0 0 20 20"><rect x="3.5" y="4.5" width="13" height="12" rx="1" fill="#fff" stroke="#444" stroke-width="1.1"/><rect x="5.5" y="6.5" width="9" height="8" fill="#4a7ec4"/><path d="M5.5 8.5H14.5M5.5 10.5H14.5M5.5 12.5H14.5M7.5 6.5V14.5M9.5 6.5V14.5M11.5 6.5V14.5M13.5 6.5V14.5" stroke="#9ab8e4" stroke-width="0.6"/></svg>
 <svg style="left:3px;top:342px" width="20" height="20" viewBox="0 0 20 20"><rect x="4.5" y="5.5" width="12" height="9" fill="#fff" stroke="#222" stroke-width="1.1"/><circle cx="10.5" cy="10" r="2.6" fill="none" stroke="#444" stroke-width="1.1"/></svg>
 <svg style="left:3px;top:364px" width="20" height="20" viewBox="0 0 20 20"><rect x="3" y="3.5" width="15" height="14" fill="#fff" stroke="#7a5a8a" stroke-width="1"/><rect x="2.5" y="3" width="16" height="3.5" fill="#3a78c8"/><path d="M3 10.2H18M3 13.8H18M6.8 6.5V17.5M10.5 6.5V17.5M14.2 6.5V17.5" stroke="#7a5a8a" stroke-width="1"/></svg>
 <svg style="left:3px;top:386px" width="20" height="20" viewBox="0 0 20 20"><rect x="3.5" y="3.5" width="14" height="13" fill="#fff" stroke="#222" stroke-width="1.1"/><path d="M6 10.5L8 6L10 10.5M6.7 9H9.3" fill="none" stroke="#2f6fbf" stroke-width="1"/><path d="M11.5 10.5H15.5M6 12.5H15.5M6 14.5H15.5" stroke="#444" stroke-width="1"/></svg>
 <div class="abs" style="left:0;top:413px;width:26px;height:1px;background:#d6d6d6"></div>
</div>
<!-- DRAWING -->
<div id="draw" class="abs">
 <div class="abs" style="left:0;top:0;width:888px;height:24px;background:#464c55"></div><div class="abs" style="left:3px;top:2px;width:1px;height:22px;background:#2a2c30"></div>
 <div class="abs dtab" style="left:3px;width:130px;background:#3a4049;color:#dfe3ea"><span style="left:33px">Drawing1.dwg</span></div>
 <div class="abs dtab" style="left:133px;width:120px;background:#5c6873;color:#f4f6fa;font-weight:bold"><span style="left:31px">C:\...\111.dwg</span></div>
 <svg style="left:10px;top:5px" width="16" height="16" viewBox="0 0 16 16"><rect x="0.500" y="0" width="15" height="16" rx="2.500" fill="#2a62c0"/><rect x="0.500" y="5" width="15" height="7" fill="#fff"/><text x="8" y="11" font-size="6.500" font-weight="bold" fill="#2a62c0" text-anchor="middle" font-family="Liberation Sans, sans-serif" textLength="13" lengthAdjust="spacingAndGlyphs">DWG</text></svg>
 <svg style="left:140px;top:5px" width="16" height="16" viewBox="0 0 16 16"><rect x="0.500" y="0" width="15" height="16" rx="2.500" fill="#2a62c0"/><rect x="0.500" y="5" width="15" height="7" fill="#fff"/><text x="8" y="11" font-size="6.500" font-weight="bold" fill="#2a62c0" text-anchor="middle" font-family="Liberation Sans, sans-serif" textLength="13" lengthAdjust="spacingAndGlyphs">DWG</text></svg>
 <svg style="left:845px;top:6px" width="40" height="12" viewBox="0 0 40 12"><path d="M5.500 1V10L0.800 5.500Z M13.500 1V10L18.200 5.500Z" fill="none" stroke="#7c828c" stroke-width="1"/><path d="M25 3.500H35L30 8.500Z" fill="#fff"/></svg>
 <div class="abs" style="left:0;top:24px;width:887px;height:1px;background:#a2a2a2"></div><div class="abs" style="left:0;top:25px;width:887px;height:1px;background:#6a6a6a"></div>
 
 <!-- canvas -->
 <div id="cv" class="abs" style="left:2px;top:26px;width:885px;height:502px;background:#212830;overflow:hidden">
 <svg style="left:-1px;top:0" width="885" height="501" viewBox="202 124 885 501" fill="none" stroke-width="1" shape-rendering="crispEdges">
<!-- dimension -->
<g stroke="#fff" stroke-width="1">
 <path d="M297 246.500H1061.500M327.500 238.500V358M1061.500 238.500V358"/>
 <path d="M585 182.500H679M632.500 136V230M629.500 178.500H635.500V186.500H629.500Z" />
</g>
<path fill="#fff" stroke="none" d="M312 244H317V245H324V248H317V249H312ZM1058.500 244H1053.500V245H1046.500V248H1053.500V249H1058.500Z"/>
<text x="679" y="213.800" transform="scale(1 1.140)" font-family="Liberation Serif, serif" font-size="22.500" fill="#fff" stroke="none" textLength="31" lengthAdjust="spacingAndGlyphs">125</text>
<!-- blue frame -->
<path stroke="#0000ff" d="M327.500 630V360.600H1061.500"/><path stroke="#0000ff" stroke-width="2.200" d="M1061.600 360V630"/>
<!-- left symbols -->
<g stroke="#0000ff" stroke-width="1.200">
 <circle cx="356.600" cy="390" r="12.300"/><rect x="347.100" y="410.300" width="19" height="18.400"/><rect x="353.300" y="416.500" width="6.400" height="6.400"/>
 <circle cx="388.300" cy="458" r="6.300"/>
 <circle cx="1032.700" cy="390" r="12.300"/>
 <path d="M1041.700 419.200L1037.200 427H1028.200L1023.700 419.200L1028.200 411.400H1037.200Z"/><circle cx="1032.700" cy="419.200" r="4.300"/><rect x="1030.500" y="417" width="4.400" height="4.400" stroke-width="0.800"/>
 <circle cx="1015.600" cy="455" r="6.300"/>
</g>
<g font-family="Liberation Sans, sans-serif" font-weight="bold" fill="#0000ff" stroke="none">
 <text x="348" y="378.200" font-size="9.500" textLength="19.500" lengthAdjust="spacingAndGlyphs">SHT</text>
 <text x="1024" y="378.200" font-size="9.500" textLength="19.500" lengthAdjust="spacingAndGlyphs">SHT</text>
 <text x="0" y="0" font-size="9" transform="translate(394.200 468.300) rotate(180)" textLength="11.400" lengthAdjust="spacingAndGlyphs">T2</text>
 <text x="1010.500" y="444" font-size="7.500" textLength="10.500" lengthAdjust="spacingAndGlyphs">T2</text>
 <text x="1042" y="421.800" font-size="7" textLength="8" lengthAdjust="spacingAndGlyphs">CE</text>
</g>
<!-- red -->
<path stroke="#ff0000" d="M417.300 625L408.600 614.200V530.500Q408.600 526.500 412.600 526.500H544.400L547.400 521.600V463L560.300 448.500H687.800L700.800 461.800V522L703.700 526.500H826L829.800 522V463.500L842.200 448.400H969.900L980.800 459.600V544.300Q980.800 549.500 975 549.500H845.400Q841.400 549.500 841.400 553.500V613.400L830.400 624.500"/>
<path stroke="#ff0000" d="M548.500 624L560 613V553.500Q560 549.500 564 549.500H685Q688.400 549.500 688.400 553V611.700L699.500 624"/>
<!-- yellow serpentine -->
<path stroke="#ffff00" d="M408.100 484V519Q408.100 522.300 411.600 522.300H539.500Q542 522.300 542 525V584.600A10.600 10.600 0 0 0 552.600 595.200H695A11.700 11.700 0 0 0 706.700 583.500V525Q706.700 522.300 709.400 522.300H822.200Q824.200 522.300 824.200 525V583.300A11.500 11.500 0 0 0 835.500 595.300H983.500Q986.800 595.300 986.800 592V556.700Q986.800 553.400 983.500 553.400H851.400Q847 553.400 847 549V490A9.400 9.400 0 0 0 837.600 480.600H692.600A9.900 9.900 0 0 0 682.700 490.500V548.800Q682.700 553.200 678.300 553.200H569.400Q565 553.200 565 548.800V490A9.400 9.400 0 0 0 555.600 480.600H411.600Q408.100 480.600 408.100 484Z"/>
<path stroke="#00ffff" d="M400 624.200H412.300M553.600 624.200H579M669 624.200H694.300M835.600 624.200H861.700"/>
<g>
 <!-- cyan inverted U -->
 <path stroke="#00ffff" d="M412.300 624.200Q421.500 622 421.500 614.200V605.600H426M426 598.900H421.500V556.700H426M426 550H421.500V497.500L426.500 492.500H539.400L544.400 497.500V550H539.500M539.500 556.700H544.400V598.900H539.500M539.500 605.600H544.400V614.200Q544.400 622 553.600 624.200"/>
 <!-- blue inverted U -->
 <path stroke="#0000ff" d="M421 624.500Q427.400 621 427.400 613V498.600H538.500V613Q538.500 621 545.700 624.500"/>
 <!-- squares -->
 <rect stroke="#0000ff" x="474.100" y="467.300" width="17.800" height="18.400"/><circle stroke="#0000ff" cx="483" cy="476.300" r="6"/>
</g><g transform="translate(282 0)">
 <!-- cyan inverted U -->
 <path stroke="#00ffff" d="M412.300 624.200Q421.500 622 421.500 614.200V605.600H426M426 598.900H421.500V556.700H426M426 550H421.500V497.500L426.500 492.500H539.400L544.400 497.500V550H539.500M539.500 556.700H544.400V598.900H539.500M539.500 605.600H544.400V614.200Q544.400 622 553.600 624.200"/>
 <!-- blue inverted U -->
 <path stroke="#0000ff" d="M421 624.500Q427.400 621 427.400 613V498.600H538.500V613Q538.500 621 545.700 624.500"/>
 <!-- squares -->
 <rect stroke="#0000ff" x="474.100" y="467.300" width="17.800" height="18.400"/><circle stroke="#0000ff" cx="483" cy="476.300" r="6"/>
</g>
<g>
 <!-- cyan head outline w/ gaps -->
 <path stroke="#00ffff" d="M571.9 399.4V394.4H531.4A10 10 0 0 0 521.4 404.400V441.500A10 10 0 0 0 531.400 451.500H553.100A9.300 9.300 0 0 1 562.400 460.800V470.400H567.800M577.200 399.400V394.400H670.800V399.400M676.200 399.400V394.400H716.600A10 10 0 0 1 726.600 404.400V441.500A10 10 0 0 1 716.600 451.500H694.900A9.300 9.300 0 0 0 685.600 460.800V470.400H680.600"/>
 <!-- cyan legs -->
 <path stroke="#00ffff" d="M567.800 476.300H562.400V519.100H567.800M567.800 525.300H562.400V578L567 582.600H681L685.600 578V525.300H680.600M680.600 519.100H685.600V476.300H680.600"/>
 <!-- blue T -->
 <path stroke="#0000ff" d="M568.500 577.400V459.400A14 14 0 0 0 554.500 445.400H530.300A3 3 0 0 1 527.300 442.400V403.700A3 3 0 0 1 530.300 400.700H717.800A3 3 0 0 1 720.800 403.700V442.400A3 3 0 0 1 717.800 445.400H693.500A14 14 0 0 0 679.500 459.400V577.400Z"/>
 <circle stroke="#0000ff" cx="543.400" cy="422.300" r="10.500"/><circle stroke="#0000ff" cx="705.700" cy="422.300" r="10.500"/>
 <circle stroke="#0000ff" cx="624.400" cy="414.900" r="4.500"/><circle stroke="#0000ff" cx="624.400" cy="429.900" r="4.500"/><circle stroke="#0000ff" cx="669" cy="414.900" r="4.500"/><circle stroke="#0000ff" cx="669" cy="429.900" r="4.500"/>
 <!-- green -->
 <rect stroke="#00ff00" x="528.500" y="402.100" width="191" height="42.100" rx="3.500"/>
 <circle stroke="#00ff00" cx="542.800" cy="421.700" r="10.500"/><circle stroke="#00ff00" cx="705.100" cy="421.700" r="10.500"/><circle stroke="#00ff00" cx="624.100" cy="414.600" r="4.500"/><circle stroke="#00ff00" cx="624.100" cy="429.600" r="4.500"/><circle stroke="#00ff00" cx="668.700" cy="414.600" r="4.500"/><circle stroke="#00ff00" cx="668.700" cy="429.600" r="4.500"/>
 <!-- hex nut -->
 <path stroke="#0000ff" d="M634.600 382.100L631.600 387.300H625.600L622.600 382.100L625.600 376.900H631.600Z"/><circle stroke="#0000ff" cx="628.600" cy="382.100" r="3"/>
</g><g transform="translate(282 0)">
 <!-- cyan head outline w/ gaps -->
 <path stroke="#00ffff" d="M571.9 399.4V394.4H531.4A10 10 0 0 0 521.4 404.400V441.500A10 10 0 0 0 531.400 451.500H553.100A9.300 9.300 0 0 1 562.400 460.800V470.400H567.800M577.200 399.400V394.400H670.800V399.400M676.200 399.400V394.400H716.600A10 10 0 0 1 726.600 404.400V441.500A10 10 0 0 1 716.600 451.500H694.900A9.300 9.300 0 0 0 685.600 460.800V470.400H680.600"/>
 <!-- cyan legs -->
 <path stroke="#00ffff" d="M567.800 476.300H562.400V519.100H567.800M567.800 525.300H562.400V578L567 582.600H681L685.600 578V525.300H680.600M680.600 519.100H685.600V476.300H680.600"/>
 <!-- blue T -->
 <path stroke="#0000ff" d="M568.500 577.400V459.400A14 14 0 0 0 554.500 445.400H530.300A3 3 0 0 1 527.300 442.400V403.700A3 3 0 0 1 530.300 400.700H717.800A3 3 0 0 1 720.800 403.700V442.400A3 3 0 0 1 717.800 445.400H693.500A14 14 0 0 0 679.500 459.400V577.400Z"/>
 <circle stroke="#0000ff" cx="543.400" cy="422.300" r="10.500"/><circle stroke="#0000ff" cx="705.700" cy="422.300" r="10.500"/>
 <circle stroke="#0000ff" cx="624.400" cy="414.900" r="4.500"/><circle stroke="#0000ff" cx="624.400" cy="429.900" r="4.500"/><circle stroke="#0000ff" cx="669" cy="414.900" r="4.500"/><circle stroke="#0000ff" cx="669" cy="429.900" r="4.500"/>
 <!-- green -->
 <rect stroke="#00ff00" x="528.500" y="402.100" width="191" height="42.100" rx="3.500"/>
 <circle stroke="#00ff00" cx="542.800" cy="421.700" r="10.500"/><circle stroke="#00ff00" cx="705.100" cy="421.700" r="10.500"/><circle stroke="#00ff00" cx="624.100" cy="414.600" r="4.500"/><circle stroke="#00ff00" cx="624.100" cy="429.600" r="4.500"/><circle stroke="#00ff00" cx="668.700" cy="414.600" r="4.500"/><circle stroke="#00ff00" cx="668.700" cy="429.600" r="4.500"/>
 <!-- hex nut -->
 <path stroke="#0000ff" d="M634.600 382.100L631.600 387.300H625.600L622.600 382.100L625.600 376.900H631.600Z"/><circle stroke="#0000ff" cx="628.600" cy="382.100" r="3"/>
</g>
<rect stroke="#0000ff" x="615.300" y="590.300" width="17.600" height="18.300"/><circle stroke="#0000ff" cx="624" cy="599.400" r="6"/>
<rect stroke="#0000ff" x="897.300" y="590.300" width="17.600" height="18.300"/><circle stroke="#0000ff" cx="906" cy="599.400" r="6"/>
<!-- UCS icon -->
<g stroke="#fff" stroke-width="1">
 <rect x="214.500" y="597.500" width="11" height="10"/>
 <path d="M219.500 597.500V518M216.400 527L219.500 518L222.700 527M226 602.500H305.500M295 599.300L305.500 602.500L295 605.600"/>
 <path d="M216 496L221.500 503.500L227 496M221.500 503.500V511M314.500 596L325 610M325 596L314.500 610"/>
</g>
</svg>

 </div>
 <!-- bottom strip -->
 <div class="abs" style="left:1px;top:527px;width:887px;height:11px;background:#474d56;overflow:hidden;color:#c4c8ce;font-size:12px;line-height:14px;white-space:nowrap">
  <svg style="left:2px;top:1px" width="58" height="10" viewBox="0 0 58 10"><path d="M1 0.500V9.500M7.500 0.500V9.500L2.500 5Z M24 0.500V9.500L19 5Z M33 0.500V9.500L38 5Z M49.500 0.500V9.500L54.500 5Z M56 0.500V9.500" fill="#8a9098" stroke="#8a9098" stroke-width="1"/></svg>
  <svg style="left:61px;top:0" width="8" height="11" viewBox="0 0 8 11"><path d="M1 0L6 11" stroke="#c4c8ce" stroke-width="1"/></svg>
  <span class="abs" style="left:73px;top:0;color:#fff;font-weight:bold">模型</span>
  <svg style="left:101px;top:0" width="8" height="11" viewBox="0 0 8 11"><path d="M6 0L1 11" stroke="#c4c8ce" stroke-width="1"/></svg>
  <span class="abs" style="left:111px;top:0">配置1</span>
  <svg style="left:147px;top:0" width="8" height="11" viewBox="0 0 8 11"><path d="M1 0L6 11" stroke="#c4c8ce" stroke-width="1"/></svg>
  <span class="abs" style="left:157px;top:0">配置2</span>
  <svg style="left:194px;top:0" width="8" height="11" viewBox="0 0 8 11"><path d="M6 0L1 11" stroke="#c4c8ce" stroke-width="1"/></svg>
 </div>
 <div class="abs" style="left:0;top:538px;width:888px;height:1px;background:#fff"></div>
 <div class="abs" style="left:0;top:0;width:1px;height:538px;background:#a8a8a8"></div><div class="abs" style="left:1px;top:0;width:1px;height:538px;background:#5c5c5c"></div>
</div>

<div id="mtb" class="abs">
 <div class="abs" style="left:4px;top:3px;width:20px;height:4px;border-top:2px solid #5aa8fa;border-bottom:1px solid #5aa8fa"></div>
 <svg style="left:3px;top:11px" width="20" height="20" viewBox="0 0 20 20"><g transform="rotate(-38 10 10)"><rect x="2.5" y="6.5" width="15" height="7" rx="2" fill="#fff" stroke="#333" stroke-width="1.1"/><rect x="11.5" y="8" width="4.5" height="4" rx="1" fill="#3a78c8"/></g></svg>
 <svg style="left:3px;top:34px" width="20" height="20" viewBox="0 0 20 20"><rect x="2.5" y="3.5" width="5" height="5" fill="#fff" stroke="#222" stroke-width="1.1"/><path d="M12 12.5H10.5V17.5H12M15 12.5V17.5H17.5V12.5" fill="none" stroke="#7a2a7a" stroke-width="1.1"/><path d="M10.5 4.5Q14.5 5 14.5 11M11.5 9L14.5 12.5L17.5 9" fill="none" stroke="#2f6fbf" stroke-width="1.6"/></svg>
 <svg style="left:3px;top:57px" width="20" height="20" viewBox="0 0 20 20"><path d="M9.5 2V18" stroke="#222" stroke-width="1"/><path d="M7.5 5V14.5H2.5Z" fill="none" stroke="#333" stroke-width="1.1"/><path d="M11.5 4V14.5H17.5Z" fill="#7a2a7a"/></svg>
 <svg style="left:3px;top:78px" width="20" height="20" viewBox="0 0 20 20"><path d="M17.5 16.5H5Q1.5 16.5 1.5 13.5Q1.5 10.5 5.5 10Q5 4 10 4Q14.5 4 14 9.5H17.5" fill="none" stroke="#222" stroke-width="1.2"/><path d="M17.5 14H6Q4 14 4.5 12.5Q5 12 8 12Q7.5 6.5 10 6.5Q12 6.5 11.5 12H17.5" fill="none" stroke="#a03a90" stroke-width="1.2"/></svg>
 <svg style="left:3px;top:99px" width="20" height="20" viewBox="0 0 20 20"><rect x="3" y="3" width="6.5" height="6.5" fill="#7a2a7a"/><rect x="10.7" y="3" width="6.5" height="6.5" fill="#8a6a8a"/><rect x="3" y="10.7" width="6.5" height="6.5" fill="#8a6a8a"/><rect x="10.7" y="10.7" width="6.5" height="6.5" fill="#8a6a8a"/></svg>
 <svg style="left:3px;top:122px" width="20" height="20" viewBox="0 0 20 20"><path d="M10 2.5V17.5M2.5 10H17.5M7.5 5L10 2.2L12.5 5M7.5 15L10 17.8L12.5 15M5 7.5L2.2 10L5 12.5M15 7.5L17.800 10L15 12.5" fill="none" stroke="#333" stroke-width="1.2"/></svg>
 <svg style="left:3px;top:144px" width="20" height="20" viewBox="0 0 20 20"><path d="M11 5A6 6 0 1 0 16 11" fill="none" stroke="#333" stroke-width="1.2"/><path d="M10 1.5L14 5L10 8.5" fill="#333"/></svg>
 <svg style="left:3px;top:165px" width="20" height="20" viewBox="0 0 20 20"><path d="M10 16.500H3.500V4.500H16.500V9.500" fill="none" stroke="#222" stroke-width="1.1"/><rect x="11" y="11" width="5.500" height="5.500" fill="none" stroke="#222" stroke-width="1" stroke-dasharray="1.500 1"/><path d="M12.500 12.500L15 15M15 12.500V15H12.500" stroke="#222" stroke-width="0.800" fill="none"/></svg>
 <svg style="left:3px;top:188px" width="20" height="20" viewBox="0 0 20 20"><path d="M3.500 3.500V16.500H16.500V3.500" fill="none" stroke="#222" stroke-width="1.100"/><path d="M3.500 3.500H16.500" stroke="#222" stroke-width="1" stroke-dasharray="1.500 1.500"/><path d="M10 14.500V7.500M6.800 10.500L10 7L13.200 10.500" fill="none" stroke="#7a2a7a" stroke-width="1.700"/></svg>
 <svg style="left:3px;top:210px" width="20" height="20" viewBox="0 0 20 20"><path d="M13 3L7 17" stroke="#222" stroke-width="1.200"/><path d="M2 10H6.500" stroke="#7a2a7a" stroke-width="1.200"/><path d="M12.500 10H17.500" stroke="#222" stroke-width="1.100" stroke-dasharray="2 1.500"/></svg>
 <svg style="left:3px;top:232px" width="20" height="20" viewBox="0 0 20 20"><path d="M17 3L11 17" stroke="#222" stroke-width="1.200"/><path d="M2 10H6" stroke="#7a2a7a" stroke-width="1.200"/><path d="M7.500 10H13" stroke="#222" stroke-width="1.100" stroke-dasharray="2 1.500"/></svg>
 <svg style="left:3px;top:254px" width="20" height="20" viewBox="0 0 20 20"><path d="M8.500 4.500H3.500V16.500H16.500V4.500H11.500" fill="none" stroke="#222" stroke-width="1.100"/><rect x="9" y="3.500" width="2" height="2" fill="#2f6fbf"/></svg>
 <svg style="left:3px;top:276px" width="20" height="20" viewBox="0 0 20 20"><path d="M5.500 4.500H3.500V16.500H16.500V4.500H14.500" fill="none" stroke="#222" stroke-width="1.100"/><rect x="6" y="3.500" width="2" height="2" fill="#2f6fbf"/><rect x="12" y="3.500" width="2" height="2" fill="#2f6fbf"/></svg>
 <svg style="left:3px;top:298px" width="20" height="20" viewBox="0 0 20 20"><path d="M3.500 16V7.500H6M16.500 16V7.500H14" fill="none" stroke="#222" stroke-width="1.100"/><path d="M3 4.500H8M5.500 2L8.500 4.500L5.500 7M17 4.500H12M14.500 2L11.500 4.500L14.500 7" fill="none" stroke="#3a9b6c" stroke-width="1.300"/></svg>
 <svg style="left:3px;top:320px" width="20" height="20" viewBox="0 0 20 20"><path d="M3.500 16.500H16.500V4" fill="none" stroke="#222" stroke-width="1.100"/><path d="M3.500 15L16.500 4" stroke="#8a2a8a" stroke-width="1.200"/></svg>
 <svg style="left:3px;top:342px" width="20" height="20" viewBox="0 0 20 20"><path d="M3.500 16.500H16.500V4" fill="none" stroke="#222" stroke-width="1.100"/><path d="M3.500 15Q3.500 4.500 15.500 4.500" fill="none" stroke="#8a2a8a" stroke-width="1.200"/></svg>
 <svg style="left:3px;top:364px" width="20" height="20" viewBox="0 0 20 20"><circle cx="8.500" cy="11" r="6.500" fill="#3f6fa8"/><path d="M11 5.500L14 2.500" stroke="#333" stroke-width="2"/><path d="M16 3V10M12.500 6.500H19.500M13.500 4L18.500 9M18.500 4L13.500 9" stroke="#fbb827" stroke-width="1.100"/></svg>
 <svg style="left:3px;top:385px" width="20" height="20" viewBox="0 0 20 20"><path d="M8 15.500H2.500V2.500H15.500V8" fill="none" stroke="#2f6fbf" stroke-width="1.200"/><path d="M6 2.500V15.500M2.500 7H6M6 11.500H9M9.500 6H15.500" stroke="#2f6fbf" stroke-width="1" fill="none"/><rect x="6" y="5" width="4" height="3.500" fill="#fff" stroke="#2f6fbf" stroke-width="1"/><path d="M18.500 8L15 11.500L13 9.500Z" fill="#444"/><path d="M12.500 10L14.500 12L13.500 13.500L11 11.500Z" fill="#777"/><path d="M10.500 12L13 14.500L11.500 18L6.500 14Z" fill="#2f6fbf"/></svg>
 <div class="abs" style="left:4px;top:416px;width:20px;height:4px;border-top:2px solid #5aa8fa;border-bottom:1px solid #5aa8fa"></div>
 <svg style="left:3px;top:426px" width="20" height="20" viewBox="0 0 20 20"><rect x="2.500" y="2.500" width="7.500" height="7.500" fill="#fff" stroke="#222" stroke-width="1.100"/><rect x="10" y="10" width="7.500" height="7.500" fill="#fff" stroke="#222" stroke-width="1.100"/><rect x="5" y="5" width="10" height="10" fill="#fbbf24"/></svg>
 <svg style="left:3px;top:448px" width="20" height="20" viewBox="0 0 20 20"><rect x="5" y="5" width="10" height="10" fill="#fbbf24"/><rect x="2.500" y="2.500" width="7" height="7" fill="#fff" stroke="#222" stroke-width="1.100"/><rect x="10.500" y="10.500" width="7" height="7" fill="#fff" stroke="#222" stroke-width="1.100"/></svg>
 <svg style="left:3px;top:470px" width="20" height="20" viewBox="0 0 20 20"><rect x="9" y="9" width="8.500" height="8.500" fill="#fff" stroke="#222" stroke-width="1.100"/><rect x="2" y="2" width="11" height="11" fill="#fbbf24"/></svg>
 <svg style="left:3px;top:492px" width="20" height="20" viewBox="0 0 20 20"><rect x="2" y="2" width="11" height="11" fill="#fbbf24"/><rect x="9" y="9" width="8.500" height="8.500" fill="#fff" stroke="#222" stroke-width="1.100"/></svg>
 <div class="abs" style="left:0;top:519px;width:26px;height:1px;background:#d6d6d6"></div>
</div>
<!-- RIGHT PANEL -->
<div id="right" class="abs">
 <div class="abs" style="left:0;top:0;width:3px;height:538px;background:#d0d6ee"></div>
 <div class="abs" style="left:8px;top:8px;width:219px;height:1px;background:#a8a8a8"></div>
 <div class="abs" style="left:8px;top:14px;width:219px;height:1px;background:#a8a8a8"></div>
 <div class="abs" style="left:231px;top:6px;width:12px;height:11px;background:#fff"></div>
 <svg style="left:233px;top:8px" width="8" height="7" viewBox="0 0 8 7"><path d="M0.5 0.5L7.5 6.5M7.5 0.5L0.5 6.5" stroke="#111" stroke-width="1.8"/></svg>
 <div class="abs" style="left:11px;top:25px;width:150px;height:23px;background:#fff;border:1px solid #9a9a9a;font-size:12px;line-height:21px;padding-left:3px">无选择<div class="abs" style="right:0;top:0;width:16px;height:21px;background:#f4f4f4"></div><div class="abs" style="right:4px;top:9px;border:3.5px solid transparent;border-top:4px solid #222;border-bottom:0"></div></div>
 <div class="abs" style="left:57px;top:13px;width:104px;height:25px;border:1px solid #3f9be6;border-radius:3px;background:linear-gradient(#d6ebfb,#a8d3f5);overflow:hidden"><div class="abs" style="left:0;top:0;width:29px;height:23px;background:#2b9aeb"></div><svg style="left:5px;top:4px" width="22" height="16" viewBox="0 0 22 16"><circle cx="4.500" cy="9.500" r="3.200" fill="none" stroke="#fff" stroke-width="2.400"/><circle cx="10.500" cy="4.500" r="3" fill="none" stroke="#fff" stroke-width="2.400"/><path d="M13.500 4.500Q17.800 5.500 18.200 10" fill="none" stroke="#fff" stroke-width="2" stroke-linecap="round"/><circle cx="18.600" cy="13.200" r="1.200" fill="#fff"/></svg><span class="abs" style="left:43px;top:3px;font-size:12px;line-height:20px;color:#6f8fae;white-space:nowrap">拖拽上传</span></div>
 <div class="abs" style="left:166px;top:23px;width:73px;height:25px;border:1px solid #333c48"></div>
 <div class="abs" style="left:190px;top:23px;width:1px;height:25px;background:#333c48"></div><div class="abs" style="left:214px;top:23px;width:1px;height:25px;background:#333c48"></div>
 <svg style="left:169px;top:27px" width="18" height="18" viewBox="0 0 18 18"><path d="M5 12.500H2.500V2.500H12.500V5" fill="none" stroke="#222" stroke-width="1.100"/><rect x="5.500" y="5.500" width="10" height="10" fill="#fff" stroke="#222" stroke-width="1.100"/><path d="M10.500 8V13M8 10.500H13" stroke="#2f6fbf" stroke-width="1.200"/></svg>
 <svg style="left:193px;top:27px" width="19" height="18" viewBox="0 0 19 18"><rect x="7" y="1.500" width="9" height="8.500" fill="#a9cdf6" stroke="#2f6fbf" stroke-width="1"/><path d="M7 6A5 5 0 1 0 10 14" fill="none" stroke="#444" stroke-width="1.100"/><path d="M11.500 7V15.500L13.500 13.500L15 17L16.200 16.500L14.800 13H17.500Z" fill="#fff" stroke="#222" stroke-width="0.900"/></svg>
 <svg style="left:217px;top:27px" width="19" height="18" viewBox="0 0 19 18"><path d="M2.500 1.500V11L5 8.800L7 13L8.500 12.300L6.800 8.500H10Z" fill="#fff" stroke="#222" stroke-width="1"/><path d="M15.500 3L9 10.500H12.500L10 16.500L17.500 8.500H13.500Z" fill="#f8b830"/></svg>
 <div class="abs ph" style="top:59px"><b>一般</b><svg style="right:8px;top:4px" width="9" height="10" viewBox="0 0 9 10"><path d="M0.800 4.500L4.500 1L8.200 4.500M0.800 9L4.500 5.500L8.200 9" fill="none" stroke="#fff" stroke-width="1.300"/></svg></div>
 <div class="abs pl" style="top:76px">颜色</div><div class="abs pv w" style="top:76px"><i class="sq"></i><span style="margin-left:18px">ByLayer</span></div>
 <div class="abs pl" style="top:93px">层</div><div class="abs pv w" style="top:93px">0</div>
 <div class="abs pl" style="top:110px">线型</div><div class="abs pv w" style="top:110px"><i class="ln"></i><span style="margin-left:57px">ByLayer</span></div>
 <div class="abs pl" style="top:127px">线型比例</div><div class="abs pv w" style="top:127px">1</div>
 <div class="abs pl" style="top:144px">线宽</div><div class="abs pv w" style="top:144px"><i class="ln"></i><span style="margin-left:57px">ByLayer</span></div>
 <div class="abs pl" style="top:161px">厚度</div><div class="abs pv w" style="top:161px">0</div>
 <div class="abs ph" style="top:187px"><b>打印样式</b><svg style="right:8px;top:4px" width="9" height="10" viewBox="0 0 9 10"><path d="M0.800 4.500L4.500 1L8.200 4.500M0.800 9L4.500 5.500L8.200 9" fill="none" stroke="#fff" stroke-width="1.300"/></svg></div>
 <div class="abs pl" style="top:204px">打印样式</div><div class="abs pv" style="top:204px">ByColor</div>
 <div class="abs pl" style="top:221px">打印样式表</div><div class="abs pv w" style="top:221px"><span class="cj">无</span></div>
 <div class="abs pl" style="top:238px">打印表附着到</div><div class="abs pv" style="top:238px"><span class="cj">模型空间</span></div>
 <div class="abs pl" style="top:255px">打印表类型</div><div class="abs pv" style="top:255px"><span class="cj">不可用</span></div>
 <div class="abs ph" style="top:279px"><b>视图</b><svg style="right:8px;top:4px" width="9" height="10" viewBox="0 0 9 10"><path d="M0.800 4.500L4.500 1L8.200 4.500M0.800 9L4.500 5.500L8.200 9" fill="none" stroke="#fff" stroke-width="1.300"/></svg></div>
 <div class="abs pl" style="top:296px">圆心X坐标</div><div class="abs pv" style="top:296px">1215.9868</div>
 <div class="abs pl" style="top:313px">圆心Y坐标</div><div class="abs pv" style="top:313px">550.0926</div>
 <div class="abs pl" style="top:330px">圆心Z坐标</div><div class="abs pv" style="top:330px">0</div>
 <div class="abs pl" style="top:347px">高度</div><div class="abs pv" style="top:347px">85.0515</div>
 <div class="abs pl" style="top:364px">宽度</div><div class="abs pv" style="top:364px">151.7318</div>
 <div class="abs ph" style="top:389px"><b>其他</b><svg style="right:8px;top:4px" width="9" height="10" viewBox="0 0 9 10"><path d="M0.800 4.500L4.500 1L8.200 4.500M0.800 9L4.500 5.500L8.200 9" fill="none" stroke="#fff" stroke-width="1.300"/></svg></div>
 <div class="abs pl" style="top:406px">打开 UCS 图标</div><div class="abs pv w" style="top:406px"><span class="cj">是</span></div>
 <div class="abs pl" style="top:423px">在原点显示 ...</div><div class="abs pv w" style="top:423px"><span class="cj">是</span></div>
 <div class="abs pl" style="top:440px">显示UCS</div><div class="abs pv w" style="top:440px"><span class="cj">是</span></div>
 <div class="abs pl" style="top:457px">UCS 名称</div><div class="abs pv" style="top:457px"></div>
 <div class="abs" style="left:13px;top:495px;width:217px;height:33px;border:1px solid #a8a8a8"></div>
 <div class="abs" style="left:0;top:537px;width:247px;height:1px;background:#9a9a9a"></div>
</div>
<!-- COMMAND -->
<div class="abs" style="left:0;top:637px;width:1365px;height:1px;background:#fff"></div>
<div class="abs" style="left:0;top:638px;width:1365px;height:1px;background:#8c8c8c"></div>
<div id="cmd" class="abs">
 <div class="abs" style="left:0;top:0;width:1365px;height:3px;background:#f6f6fc"></div>
 <div class="abs" style="left:0;top:3px;width:14px;height:62px;background:#f4f4f4"></div>
 <svg style="left:7px;top:11px" width="7" height="6" viewBox="0 0 7 6"><path d="M0.500 0.500L6.500 5.500M6.500 0.500L0.500 5.500" stroke="#111" stroke-width="1.600"/></svg>
 <div class="abs" style="left:6px;top:23px;width:1px;height:37px;background:#a8a8a8"></div>
 <div class="abs" style="left:12px;top:23px;width:1px;height:37px;background:#a8a8a8"></div>
 <div class="abs cl" style="left:19px;top:6px">命令<span class="mono">:</span></div>
 <div class="abs cl" style="left:19px;top:21px">自动保存到<span class="mono"> C:\Users\Administrator\AppData\Local\Temp\111_zws14585.zs$ ...</span></div>
 <div class="abs" style="left:18px;top:45px;width:1311px;height:1px;background:#9a9a9a"></div>
 <div class="abs cl" style="left:19px;top:47px">命令<span class="mono">:</span></div>
 <!-- v scrollbar -->
 <div class="abs" style="left:1329px;top:7px;width:17px;height:38px;border:1px solid #8c8c8c;background:#fff"></div>
 <div class="abs" style="left:1329px;top:11px;width:17px;height:1px;background:#8c8c8c"></div>
 <div class="abs" style="left:1329px;top:27px;width:17px;height:2px;background:#8c8c8c"></div>
 <div class="abs" style="left:1334px;top:35px;border:3.500px solid transparent;border-top:4px solid #222;border-bottom:0"></div>
 <!-- h scrollbar -->
 <div class="abs" style="left:1263px;top:46px;width:65px;height:17px;border:1px solid #8c8c8c;background:#fff"></div>
 <div class="abs" style="left:1279px;top:46px;width:1px;height:17px;background:#8c8c8c"></div>
 <div class="abs" style="left:1295px;top:47px;width:16px;height:15px;background:#c8c8c8;border-left:1px solid #8c8c8c;border-right:1px solid #8c8c8c"></div>
 <div class="abs" style="left:1269px;top:51px;border:3.500px solid transparent;border-right:4px solid #222;border-left:0"></div>
 <div class="abs" style="left:1318px;top:51px;border:3.500px solid transparent;border-left:4px solid #222;border-right:0"></div>
 <div class="abs" style="left:1350px;top:3px;width:15px;height:60px;background:linear-gradient(#eceef8,#c8cfe8 30%,#c8cfe8)"></div>
</div>
<div id="status" class="abs">
 <div class="abs" style="left:7px;top:6px;font-family:'Liberation Mono',monospace;font-size:12px;letter-spacing:-1.200px;line-height:20px;white-space:pre">1213.7779, 582.6872, 0.0000</div>
 <svg style="left:261px;top:6px" width="16" height="16" viewBox="0 0 16 16"><path d="M0.500 0.500H11.500V11.500H0.500ZM4.200 0.500V11.500M7.800 0.500V11.500M0.500 4.200H11.500M0.500 7.800H11.500" fill="none" stroke="#111" stroke-width="1.100"/><path d="M13 0.500V13H0.500" fill="none" stroke="#2f6fbf" stroke-width="3"/></svg>
 <svg style="left:285px;top:6px" width="16" height="16" viewBox="0 0 16 16"><path d="M5.700 1V15M10.300 1V15M1 5.700H15M1 10.300H15" stroke="#2f6fbf" stroke-width="1.100"/><rect x="0.600" y="0.600" width="14.800" height="14.800" fill="none" stroke="#111" stroke-width="1.200"/></svg>
 <svg style="left:308px;top:6px" width="17" height="16" viewBox="0 0 17 16"><path d="M2.500 0.500V14.500H16.500" fill="none" stroke="#111" stroke-width="1.200"/><rect x="1" y="11" width="4" height="4" fill="#fff" stroke="#2f6fbf" stroke-width="1.100"/></svg>
 <div class="abs sb" style="left:331px"></div>
 <svg style="left:334px;top:6px" width="17" height="16" viewBox="0 0 17 16"><circle cx="7.500" cy="8.500" r="6.500" fill="none" stroke="#111" stroke-width="1.200"/><path d="M15.500 0.500L7.500 8.500H16.500" fill="none" stroke="#2f6fbf" stroke-width="1.100"/></svg>
 <div class="abs sb" style="left:355px"></div>
 <svg style="left:357px;top:6px" width="16" height="16" viewBox="0 0 16 16"><rect x="1" y="1.500" width="14" height="13.500" fill="#fff" stroke="#111" stroke-width="1.300"/><rect x="0.600" y="0.800" width="4" height="4" fill="#fff" stroke="#e0442a" stroke-width="1.100"/></svg>
 <div class="abs sb" style="left:379px"></div>
 <svg style="left:381px;top:6px" width="17" height="16" viewBox="0 0 17 16"><path d="M15.500 1L1.500 14H16.500" fill="none" stroke="#111" stroke-width="1.200"/><rect x="7" y="4.500" width="3.500" height="3.500" fill="#fff" stroke="#2f6fbf" stroke-width="1.100"/></svg>
 <div class="abs sb" style="left:403px"></div>
 <svg style="left:405px;top:6px" width="17" height="16" viewBox="0 0 17 16"><path d="M6 1.500V12.500M0.500 7H11.500" stroke="#111" stroke-width="1.200"/><rect x="7.500" y="10.500" width="8.500" height="3.500" fill="#fff" stroke="#2f6fbf" stroke-width="1.100"/></svg>
 <svg style="left:430px;top:8px" width="15" height="12" viewBox="0 0 15 12"><path d="M0 1.500H14.500M0 6H14.500M0 10.500H14.500" stroke="#111" stroke-width="2.400"/></svg>
 <div class="abs sb" style="left:451px"></div>
 <svg style="left:453px;top:6px" width="17" height="16" viewBox="0 0 17 16"><path d="M3.500 0.500V6.500M0.500 3.500H6.500" stroke="#111" stroke-width="1.100"/><path d="M9 5.500H5.500V11H7" fill="none" stroke="#111" stroke-width="1.100"/><rect x="8.500" y="7.500" width="6" height="6.500" fill="#fff" stroke="#2f6fbf" stroke-width="1.100"/></svg>
 <div class="abs sb" style="left:475px"></div>
 <svg style="left:477px;top:5px" width="18" height="18" viewBox="0 0 18 18"><path d="M5 1.500H12.500V9M5 1.500V5M7.500 1.500V5M10 1.500V5M5 3.800H12.500M9 6H12.500" fill="none" stroke="#111" stroke-width="1"/><rect x="1" y="5" width="8.500" height="8.500" fill="none" stroke="#2f6fbf" stroke-width="1.200" stroke-dasharray="2 1.300"/><rect x="3.500" y="7.500" width="3.500" height="3.500" fill="#2f6fbf"/><path d="M15.500 9V13.500H9.500M11.500 11.300L9 13.500L11.500 15.800" fill="none" stroke="#3a9b6c" stroke-width="1.700"/></svg>

 <svg style="left:1291px;top:6px" width="15" height="15" viewBox="0 0 15 15"><g transform="translate(7.500 7.500)"><g fill="#4a7ab8"><rect x="-1.400" y="-7" width="2.800" height="14"/><rect x="-1.400" y="-7" width="2.800" height="14" transform="rotate(45)"/><rect x="-1.400" y="-7" width="2.800" height="14" transform="rotate(90)"/><rect x="-1.400" y="-7" width="2.800" height="14" transform="rotate(135)"/></g><circle r="4.800" fill="#4a7ab8"/><circle r="2.600" fill="#f0eded"/></g></svg>
 <div class="abs" style="left:1310px;top:12px;border:3.500px solid transparent;border-top:4px solid #111;border-bottom:0"></div>
 <div class="abs" style="left:1325px;top:4px;width:14px;height:18px;border:1px solid #aaa"></div>
 <div class="abs" style="left:1329px;top:11px;border:3.500px solid transparent;border-top:4px solid #148a14;border-bottom:0"></div>
 <svg style="left:1345px;top:7px" width="14" height="13" viewBox="0 0 15 14"><path d="M0.700 4.500V0.700H4.500M0.700 0.700L5 5M10.500 0.700H14.300V4.500M14.300 0.700L10 5M0.700 9.500V13.300H4.500M0.700 13.300L5 9M14.300 9.500V13.300H10.500M14.300 13.300L10 9" fill="none" stroke="#222" stroke-width="1.100"/></svg>
 <div class="abs" style="left:0;top:23px;width:1365px;height:1px;background:#8c95a2"></div><div class="abs" style="left:0;top:24px;width:1365px;height:1px;background:#26364a"></div>
</div>

</body>
</html>
